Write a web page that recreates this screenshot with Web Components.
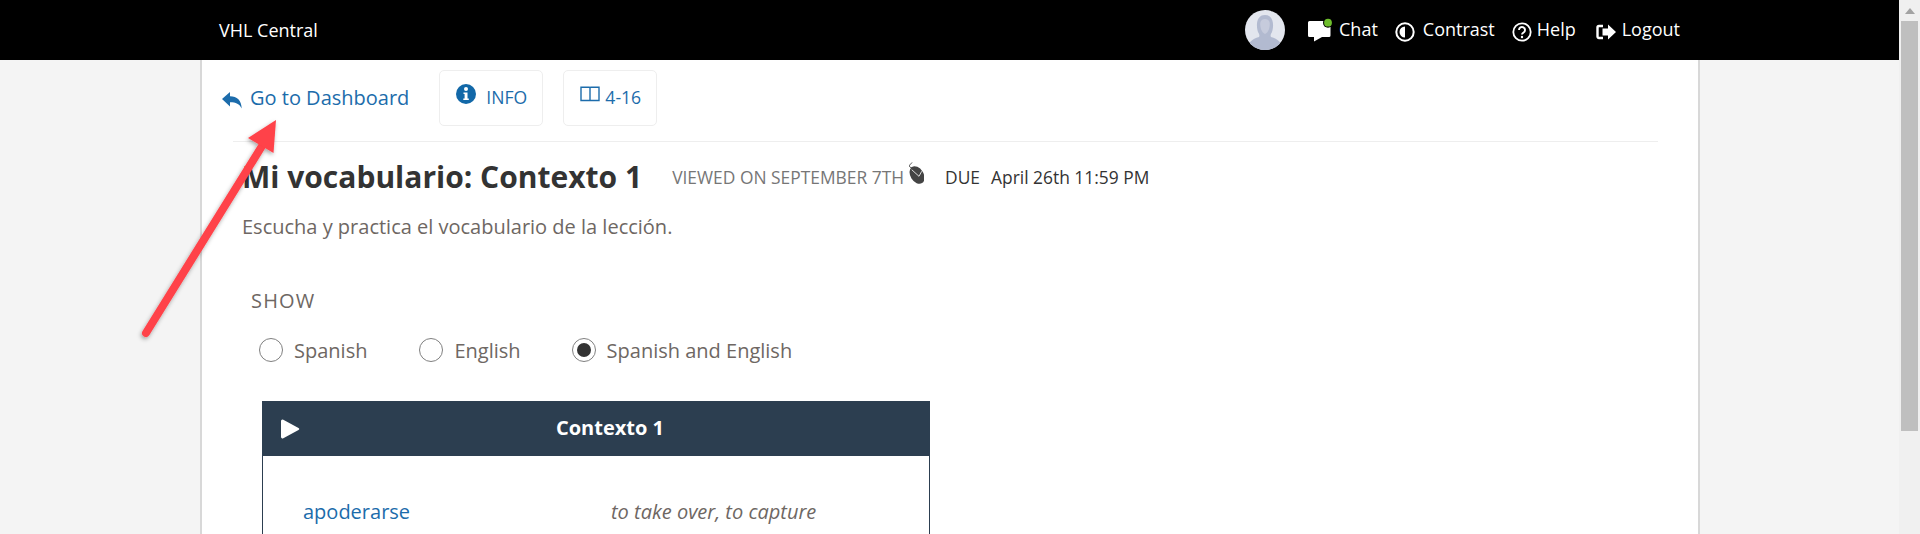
<!DOCTYPE html>
<html lang="en"><head><meta charset="utf-8"><title>Mi vocabulario</title>
<style>
html,body{margin:0;height:534px;overflow:hidden;background:#f4f4f4;font-family:"Open Sans",sans-serif}
body{display:flex;width:1920px}
</style></head><body>
<vhl-page>
  <vhl-topbar slot="top"></vhl-topbar>
  <vhl-card>
    <vhl-toolbar></vhl-toolbar>
    <vhl-heading></vhl-heading>
    <vhl-show></vhl-show>
    <vhl-vocab></vhl-vocab>
  </vhl-card>
  <vhl-arrow slot="over"></vhl-arrow>
</vhl-page>
<vhl-scrollbar></vhl-scrollbar>
<script>
function def(name, html){
  customElements.define(name, class extends HTMLElement{
    constructor(){super();this.attachShadow({mode:'open'}).innerHTML=html;}
  });
}
def('vhl-page',`<style>:host{display:block;width:1899px;height:534px;position:relative;overflow:hidden;background:#f4f4f4}</style><slot name="top"></slot><slot></slot><slot name="over"></slot>`);
def('vhl-topbar',`<style>
:host{display:flex;align-items:center;height:60px;background:#000;color:#fff;font-size:18px;padding:0 219px;box-sizing:border-box;width:1899px}
.brand{flex:1;color:#fff}
.item{display:flex;align-items:center;margin-top:-2px}
svg{display:block}
.avatar{margin-right:23px}
</style>
<span class="brand">VHL Central</span>
<svg class="avatar" width="40" height="40" viewBox="0 0 40 40"><defs><clipPath id="c"><circle cx="20" cy="20" r="20"/></clipPath></defs><g clip-path="url(#c)"><rect width="40" height="40" fill="#e3e6ee"/><path d="M3 40c0-8 4-11 11-13 1-2 0-3-1-5-2-6-2-17 7-17s9 11 7 17c-1 2-2 3-1 5 7 2 11 5 11 13z" fill="#b2bad0"/><path d="M15.500 12c1-4 8-4 9 0 1 4-1 11-4.500 12-3.500-1-5.500-8-4.500-12z" fill="#c6cbdc"/></g></svg>
<span class="item" style="margin-right:17px"><svg width="24" height="24" viewBox="0 0 24 24" style="margin-right:7px;margin-top:2px"><path d="M1.500 3H21a1.500 1.500 0 0 1 1.500 1.500V17.500A1.500 1.500 0 0 1 21 19H14L6 23.500V19H1.500A1.500 1.500 0 0 1 0 17.500V4.500A1.500 1.500 0 0 1 1.500 3z" fill="#fff"/><circle cx="20" cy="4.700" r="5" fill="#000"/><circle cx="20" cy="4.700" r="3.900" fill="#6ebe2c"/></svg>Chat</span>
<span class="item" style="margin-right:17px"><svg width="20" height="20" viewBox="0 0 20 20" style="margin-right:8px;margin-top:6px"><circle cx="10" cy="10" r="8.700" fill="none" stroke="#fff" stroke-width="2"/><path d="M10 4.500a5.500 5.500 0 0 0 0 11z" fill="#fff"/></svg>Contrast</span>
<span class="item" style="margin-right:20px"><svg width="20" height="20" viewBox="0 0 20 20" style="margin-right:5px;margin-top:6px"><circle cx="10" cy="10" r="8.700" fill="none" stroke="#fff" stroke-width="1.800"/><path d="M7 8a3 3 0 1 1 4.600 2.500C10.500 11.200 10 11.700 10 12.500" fill="none" stroke="#fff" stroke-width="1.900"/><circle cx="10" cy="15" r="1.200" fill="#fff"/></svg>Help</span>
<span class="item"><svg width="20" height="16" viewBox="0 0 20 16" style="margin-right:6px;margin-top:5px"><path d="M7 2H3a1.500 1.500 0 0 0-1.500 1.500v9A1.500 1.500 0 0 0 3 14h4" fill="none" stroke="#fff" stroke-width="2.400"/><path d="M6.500 4.500H12V.5L20 8l-8 7.500V11.500H6.500z" fill="#fff"/></svg>Logout</span>`);
def('vhl-card',`<style>
:host{display:block;margin-left:200px;width:1500px;height:474px;box-sizing:border-box;background:#fff;border-left:2px solid #d8d8d8;border-right:2px solid #d8d8d8;padding:0 40px 0 31px;overflow:hidden}
</style><slot></slot>`);
def('vhl-toolbar',`<style>
:host{display:flex;align-items:center;height:82px;box-sizing:border-box;border-bottom:1px solid #eee;color:#1c6cab;font-size:20px;padding-bottom:6px}
svg{display:block}
.back{display:flex;align-items:center;margin-left:-11px;margin-right:30px}
.btn{display:flex;align-items:center;height:56px;box-sizing:border-box;border:1px solid #eee;border-radius:5px;font-size:17.6px;padding-bottom:2px}
</style>
<span class="back"><svg width="20" height="18" viewBox="0 0 20 18" style="margin-right:8px;margin-top:4px"><path d="M0 8 8 1v4.200c7 0 11.500 4 11.700 12.300C17.500 13 14 11.300 8 11.300V15.500z" fill="#1c6cab"/></svg>Go to Dashboard</span>
<span class="btn" style="width:104px;padding-left:16px;margin-right:20px"><svg width="20" height="20" viewBox="0 0 20 20" style="margin-right:10px;margin-top:-6px"><circle cx="10" cy="10" r="10" fill="#1268a8"/><circle cx="10" cy="5" r="2" fill="#fff"/><path d="M7.500 8.500h4v6h1.300V16H7.300v-1.500h1.300V10H7.500z" fill="#fff"/></svg>INFO</span>
<span class="btn" style="width:94px;padding-left:16px"><svg width="20" height="16" viewBox="0 0 20 16" style="margin-right:5px;margin-top:-5px"><path d="M1 1.200H9.300L10 2 10.700 1.200H19V14.500H1zM10 2V14.500" fill="none" stroke="#1c6cab" stroke-width="1.400"/></svg>4-16</span>`);
def('vhl-heading',`<style>
:host{display:block;color:#333}
.row{display:flex;align-items:center;height:60px;margin-left:9px;padding-top:10px;box-sizing:border-box}
h1{margin:0 30px 0 0;font-size:30px;font-weight:700;color:#333;line-height:40px;white-space:nowrap}
.v{font-size:17.4px;color:#767676;white-space:nowrap}
.d{font-size:17.4px;color:#333;white-space:nowrap}
svg{display:block}
p{margin:12px 0 0 9px;font-size:20px;line-height:26px;color:#6e6763}
</style>
<div class="row"><h1>Mi vocabulario: Contexto 1</h1><span class="v">VIEWED ON SEPTEMBER 7TH</span>
<svg width="17" height="26" viewBox="0 0 17 26" style="margin:-4px 21px 0 3px"><path d="M5 .5C4 2 2 3 2.500 4.500 3 6 5.500 5 6.500 7" fill="none" stroke="#444" stroke-width="1"/><ellipse cx="10" cy="13" rx="6.500" ry="9.500" transform="rotate(-32 10 13)" fill="#444"/><path d="M4.700 7.700 12 14.300 14.700 9.300" stroke="#fff" stroke-width=".8" fill="none"/></svg>
<span class="d" style="margin-right:11px">DUE</span><span class="d">April 26th 11:59 PM</span></div>
<p>Escucha y practica el vocabulario de la lección.</p>`);
def('vhl-show',`<style>
:host{display:block;color:#6e6763;margin-left:18px;font-size:20px}
.t{margin-top:48px;line-height:26px;letter-spacing:1.2px;font-size:20px}
.r{display:flex;align-items:center;margin-top:23px;height:26px}
.o{display:flex;align-items:center}
.c{width:24px;height:24px;box-sizing:border-box;border:1px solid #808080;border-radius:50%;margin-right:11px;display:flex;align-items:center;justify-content:center;background:#fff}
.c i{display:block;width:14px;height:14px;border-radius:50%;background:#333}
</style>
<div class="t">SHOW</div>
<div class="r" style="margin-left:8px"><span class="o" style="margin-right:52px"><span class="c"></span>Spanish</span><span class="o" style="margin-right:51px"><span class="c"></span>English</span><span class="o"><span class="c"><i></i></span>Spanish and English</span></div>`);
def('vhl-vocab',`<style>
:host{display:block;width:668px;margin:38px 0 0 29px;box-sizing:border-box;border:1px solid #2c3e50;border-bottom:0;height:200px}
.h{display:flex;align-items:center;height:54px;box-sizing:border-box;padding:0 0 3px 28px;background:#2c3e50;color:#fff;font-weight:700;font-size:20px;justify-content:center;position:relative}
svg{position:absolute;left:17px;top:17px}
.w{display:flex;padding-top:43px;font-size:20px;line-height:26px}
.a{color:#1c6cab;margin-left:40px;width:308px}
.b{color:#6e6763;font-style:italic}
</style>
<div class="h"><svg width="20" height="20" viewBox="0 0 20 20"><path d="M1 2a1.500 1.500 0 0 1 2.300-1.200L18.500 9a1.200 1.200 0 0 1 0 2L3.300 19.200A1.500 1.500 0 0 1 1 18z" fill="#fff"/></svg>Contexto 1</div>
<div class="w"><span class="a">apoderarse</span><span class="b">to take over, to capture</span></div>`);
def('vhl-arrow',`<style>:host{position:absolute;left:0;top:0;width:400px;height:400px;pointer-events:none}svg{display:block}</style>
<svg width="400" height="400" viewBox="0 0 400 400"><defs><filter id="s" x="-30%" y="-30%" width="160%" height="160%"><feDropShadow dx="-1" dy="2" stdDeviation="2" flood-color="#000" flood-opacity=".35"/></filter></defs>
<g filter="url(#s)"><path d="M146 333 262 146" stroke="#ff4248" stroke-width="8" stroke-linecap="round" fill="none"/><path d="M276 120 273.500 153 248 138z" fill="#ff4248"/></g></svg>`);
def('vhl-scrollbar',`<style>
:host{display:block;width:21px;height:534px;background:#f0f0f0;position:relative}
.up{width:0;height:0;margin:8px auto 0;border:5px solid transparent;border-top:0;border-bottom:6px solid #a3a3a3}
.th{width:17px;height:410px;margin:7px 0 0 2px;background:#bfbfbf}
</style><div class="up"></div><div class="th"></div>`);
</script>
</body></html>
